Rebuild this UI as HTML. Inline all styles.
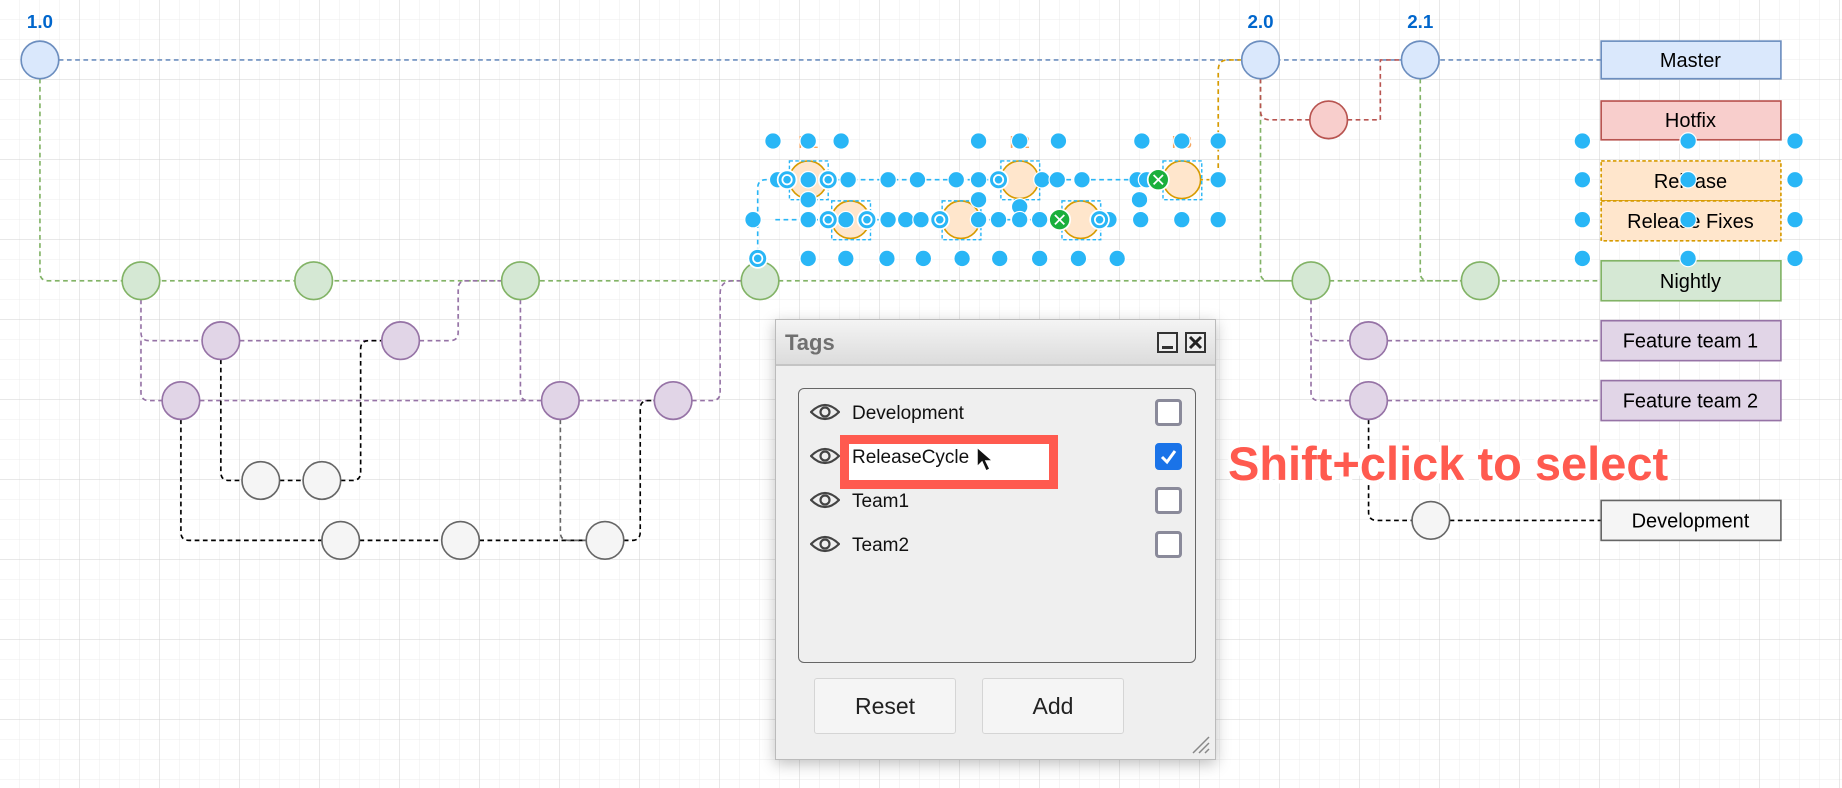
<!DOCTYPE html>
<html><head><meta charset="utf-8"><style>
html,body{margin:0;padding:0;background:#fff;}
body{width:1842px;height:788px;position:relative;overflow:hidden;font-family:"Liberation Sans",Arial,sans-serif;}
svg.main{position:absolute;left:0;top:0;}
.dlg{position:absolute;left:775px;top:319px;width:441px;height:441px;background:#efefef;border:1px solid #bbb;box-shadow:0 4px 14px rgba(0,0,0,.25);box-sizing:border-box;}
.tb{position:absolute;left:0;top:0;width:100%;height:46px;background:linear-gradient(#f4f4f4,#dcdcdc);border-bottom:2px solid #c4c4c4;box-sizing:border-box;}
.tb span{position:absolute;left:9px;top:10px;font-weight:bold;font-size:22px;color:#707070;}
.wb{position:absolute;top:12px;width:21px;height:21px;border:2px solid #333;box-sizing:border-box;background:#eee;}
.list{position:absolute;left:22px;top:68px;width:398px;height:275px;border:1.5px solid #666;border-radius:6px;box-sizing:border-box;}
.row{position:absolute;left:0;width:100%;height:30px;}
.row .t{position:absolute;left:53px;top:6px;font-size:19px;color:#111;}
.cb{position:absolute;left:356px;top:2px;width:27px;height:27px;border:3px solid #8a8a9a;border-radius:4px;box-sizing:border-box;background:#fff;}
.btn{position:absolute;top:358px;width:142px;height:56px;border:1.5px solid #d5d5d5;border-radius:3px;background:#f5f5f5;box-sizing:border-box;text-align:center;line-height:54px;font-size:23px;color:#222;}
</style></head><body>
<svg class="main" width="1842" height="788" viewBox="0 0 1842 788">
<defs>
<pattern id="mi" width="20" height="20" patternUnits="userSpaceOnUse"><path d="M20 0V20M0 20H20" stroke="#ececec" stroke-width="1" fill="none"/></pattern>
<pattern id="ma" width="80" height="80" patternUnits="userSpaceOnUse"><path d="M80 0V80M0 80H80" stroke="#d2d2d2" stroke-width="1" fill="none"/></pattern>
</defs>
<rect width="1842" height="788" fill="url(#mi)"/>
<rect width="1842" height="788" fill="url(#ma)"/>
<g transform="scale(1.17474)" font-family="Liberation Sans, Arial, sans-serif">
<g fill="none" stroke-width="1.4" stroke-dasharray="4 3">
<path d="M50 51H1363" stroke="#6c8ebf"/>
<path d="M34 67V232Q34 239 41 239H1363M1073 67V232Q1073 239 1080 239H1100M1209 67V232Q1209 239 1216 239H1244" stroke="#82b366"/>
<path d="M1073 67V94Q1073 102 1081 102H1115M1147 102H1175V51H1193" stroke="#b85450"/>
<path d="M1037 150V60Q1037 51 1045 51H1057M1020 153H1037" stroke="#d79b00"/>
<path d="M120 255V283Q120 290 127 290H172M204 290H325M357 290H383Q390 290 390 283V246Q390 239 397 239H427M1116 255V283Q1116 290 1123 290H1149M1181 290H1363M120 290V334Q120 341 127 341H138M170 341H461M443 255V334Q443 341 450 341M493 341H557M589 341H606Q613 341 613 334V250Q613 239 624 239H631M1116 290V334Q1116 341 1123 341H1149M1181 341H1363" stroke="#9673a6"/>
<path d="M188 306V402Q188 409 195 409H206M238 409H258M290 409H300Q307 409 307 402V297Q307 290 314 290H325M154 357V453Q154 460 161 460H274M306 460H376M408 460H499M531 460H538Q545 460 545 453V348Q545 341 552 341H557M1165 357V436Q1165 443 1172 443H1202M1234 443H1363" stroke="#000"/>
<path d="M477 357V453Q477 460 484 460H499" stroke="#666"/>
<path d="M645 215V160Q645 153 652 153H1000M660 187H940" stroke="#29b6f6"/>
</g>
<g stroke-width="1.4">
<g fill="#dae8fc" stroke="#6c8ebf"><circle cx="34" cy="51" r="16"/><circle cx="1073" cy="51" r="16"/><circle cx="1209" cy="51" r="16"/></g>
<circle cx="1131" cy="102" r="16" fill="#f8cecc" stroke="#b85450"/>
<g fill="#d5e8d4" stroke="#82b366"><circle cx="120" cy="239" r="16"/><circle cx="267" cy="239" r="16"/><circle cx="443" cy="239" r="16"/><circle cx="647" cy="239" r="16"/><circle cx="1116" cy="239" r="16"/><circle cx="1260" cy="239" r="16"/></g>
<g fill="#e1d5e7" stroke="#9673a6"><circle cx="188" cy="290" r="16"/><circle cx="341" cy="290" r="16"/><circle cx="1165" cy="290" r="16"/><circle cx="154" cy="341" r="16"/><circle cx="477" cy="341" r="16"/><circle cx="573" cy="341" r="16"/><circle cx="1165" cy="341" r="16"/></g>
<g fill="#f5f5f5" stroke="#666"><circle cx="222" cy="409" r="16"/><circle cx="274" cy="409" r="16"/><circle cx="290" cy="460" r="16"/><circle cx="392" cy="460" r="16"/><circle cx="515" cy="460" r="16"/><circle cx="1218" cy="443" r="16"/></g>
<g fill="#ffe6cc" stroke="#d79b00"><circle cx="688" cy="153" r="16"/><circle cx="724" cy="187" r="16"/><circle cx="818" cy="187" r="16"/><circle cx="868" cy="153" r="16"/><circle cx="920" cy="187" r="16"/><circle cx="1006" cy="153" r="16"/></g>
<g fill="none" stroke="#29b6f6" stroke-dasharray="3 2" stroke-width="1.2"><rect x="672" y="137" width="33" height="33"/><rect x="708" y="171" width="33" height="33"/><rect x="802" y="171" width="33" height="33"/><rect x="852" y="137" width="33" height="33"/><rect x="904" y="171" width="33" height="33"/><rect x="990" y="137" width="33" height="33"/></g>
</g>
<g font-weight="bold" font-size="16" fill="#0066cc" text-anchor="middle"><text x="34" y="24">1.0</text><text x="1073" y="24">2.0</text><text x="1209" y="24">2.1</text></g>
<g font-size="15" fill="#f5a55f" text-anchor="middle"><text x="688" y="126">F1</text><text x="868" y="126">F2</text><text x="1006" y="126">F3</text></g>
<g stroke-width="1.4" font-size="17" text-anchor="middle" fill="#000">
<rect x="1363" y="35" width="153" height="32" fill="#dae8fc" stroke="#6c8ebf"/><text x="1439" y="57">Master</text>
<rect x="1363" y="86" width="153" height="33" fill="#f8cecc" stroke="#b85450"/><text x="1439" y="108">Hotfix</text>
<rect x="1363" y="137" width="153" height="34" fill="#ffe6cc" stroke="#d79b00" stroke-dasharray="3 2"/><text x="1439" y="160">Release</text>
<rect x="1363" y="171" width="153" height="34" fill="#ffe6cc" stroke="#d79b00" stroke-dasharray="3 2"/><text x="1439" y="194">Release Fixes</text>
<rect x="1363" y="222" width="153" height="34" fill="#d5e8d4" stroke="#82b366"/><text x="1439" y="245">Nightly</text>
<rect x="1363" y="273" width="153" height="34" fill="#e1d5e7" stroke="#9673a6"/><text x="1439" y="296">Feature team 1</text>
<rect x="1363" y="324" width="153" height="34" fill="#e1d5e7" stroke="#9673a6"/><text x="1439" y="347">Feature team 2</text>
<rect x="1363" y="426" width="153" height="34" fill="#f5f5f5" stroke="#666"/><text x="1439" y="449">Development</text>
</g>
<g fill="#29b6f6" stroke="#fff" stroke-width="1">
<circle cx="658" cy="120" r="7"/><circle cx="688" cy="120" r="7"/><circle cx="716" cy="120" r="7"/><circle cx="833" cy="120" r="7"/><circle cx="868" cy="120" r="7"/><circle cx="901" cy="120" r="7"/><circle cx="972" cy="120" r="7"/><circle cx="1006" cy="120" r="7"/><circle cx="1037" cy="120" r="7"/>
<circle cx="662" cy="153" r="7"/><circle cx="688" cy="153" r="7"/><circle cx="722" cy="153" r="7"/><circle cx="756" cy="153" r="7"/><circle cx="781" cy="153" r="7"/><circle cx="814" cy="153" r="7"/><circle cx="833" cy="153" r="7"/><circle cx="887" cy="153" r="7"/><circle cx="900" cy="153" r="7"/><circle cx="921" cy="153" r="7"/><circle cx="968" cy="153" r="7"/><circle cx="976" cy="153" r="7"/><circle cx="1037" cy="153" r="7"/>
<circle cx="833" cy="170" r="7"/><circle cx="868" cy="176" r="7"/><circle cx="970" cy="170" r="7"/><circle cx="688" cy="170" r="7"/>
<circle cx="641" cy="187" r="7"/><circle cx="688" cy="187" r="7"/><circle cx="720" cy="187" r="7"/><circle cx="756" cy="187" r="7"/><circle cx="771" cy="187" r="7"/><circle cx="784" cy="187" r="7"/><circle cx="833" cy="187" r="7"/><circle cx="850" cy="187" r="7"/><circle cx="868" cy="187" r="7"/><circle cx="885" cy="187" r="7"/><circle cx="944" cy="187" r="7"/><circle cx="971" cy="187" r="7"/><circle cx="1006" cy="187" r="7"/><circle cx="1037" cy="187" r="7"/>
<circle cx="688" cy="220" r="7"/><circle cx="720" cy="220" r="7"/><circle cx="755" cy="220" r="7"/><circle cx="786" cy="220" r="7"/><circle cx="819" cy="220" r="7"/><circle cx="851" cy="220" r="7"/><circle cx="885" cy="220" r="7"/><circle cx="918" cy="220" r="7"/><circle cx="951" cy="220" r="7"/>
<circle cx="1347" cy="120" r="7"/><circle cx="1437" cy="120" r="7"/><circle cx="1528" cy="120" r="7"/>
<circle cx="1347" cy="153" r="7"/><circle cx="1437" cy="153" r="7"/><circle cx="1528" cy="153" r="7"/>
<circle cx="1347" cy="187" r="7"/><circle cx="1437" cy="187" r="7"/><circle cx="1528" cy="187" r="7"/>
<circle cx="1347" cy="220" r="7"/><circle cx="1437" cy="220" r="7"/><circle cx="1528" cy="220" r="7"/>
</g>
<g fill="#29b6f6" stroke="#fff" stroke-width="1.5">
<circle cx="670" cy="153" r="8"/><circle cx="705" cy="153" r="8"/><circle cx="738" cy="187" r="8"/><circle cx="800" cy="187" r="8"/><circle cx="850" cy="153" r="8"/><circle cx="645" cy="220" r="8"/><circle cx="705" cy="187" r="8"/><circle cx="936" cy="187" r="8"/>
</g>
<g fill="none" stroke="#fff" stroke-width="1.5"><circle cx="670" cy="153" r="4"/><circle cx="705" cy="153" r="4"/><circle cx="738" cy="187" r="4"/><circle cx="800" cy="187" r="4"/><circle cx="850" cy="153" r="4"/><circle cx="645" cy="220" r="4"/><circle cx="705" cy="187" r="4"/><circle cx="936" cy="187" r="4"/></g>
<g stroke="#fff" stroke-width="1.5"><circle cx="986" cy="153" r="9" fill="#1aaf3c"/><circle cx="902" cy="187" r="9" fill="#1aaf3c"/><path d="M982 149l8 8M990 149l-8 8M898 183l8 8M906 183l-8 8"/></g>
</g>
<text x="1228" y="480" font-family="Liberation Sans, Arial, sans-serif" font-weight="bold" font-size="47" fill="#ff5a4f" stroke="#fff" stroke-width="7" paint-order="stroke">Shift+click to select</text>
</svg>
<div class="dlg">
<div class="tb"><span>Tags</span>
<div class="wb" style="left:381px"><div style="position:absolute;left:3px;right:3px;bottom:2px;height:3px;background:#333"></div></div>
<div class="wb" style="left:409px"><svg width="17" height="17" style="position:absolute;left:0;top:0"><path d="M3 3L14 14M14 3L3 14" stroke="#222" stroke-width="3"/></svg></div>
</div>
<div class="list">
<div class="row" style="top:8px"><svg width="30" height="20" style="position:absolute;left:11px;top:5px"><path d="M1 10Q15 -4 29 10Q15 24 1 10Z" fill="none" stroke="#444" stroke-width="2.2"/><circle cx="15" cy="10" r="4.5" fill="none" stroke="#444" stroke-width="2.2"/></svg><span class="t">Development</span><div class="cb"></div></div>
<div class="row" style="top:52px"><div style="position:absolute;left:42px;top:-6px;width:200px;height:36px;border:9px solid #ff5a4f;background:#fff;box-sizing:content-box;margin-left:-1px"></div><svg width="30" height="20" style="position:absolute;left:11px;top:5px"><path d="M1 10Q15 -4 29 10Q15 24 1 10Z" fill="none" stroke="#444" stroke-width="2.2"/><circle cx="15" cy="10" r="4.5" fill="none" stroke="#444" stroke-width="2.2"/></svg><span class="t">ReleaseCycle</span><svg width="26" height="30" style="position:absolute;left:176px;top:4px"><path d="M2 2L2 22L7 17L11 26L15 24L11 16L18 16Z" fill="#111" stroke="#fff" stroke-width="1.5"/></svg><div class="cb" style="background:#1a73e8;border-color:#1a73e8"><svg width="21" height="21"><path d="M4 11L9 16L17 5" fill="none" stroke="#fff" stroke-width="3"/></svg></div></div>
<div class="row" style="top:96px"><svg width="30" height="20" style="position:absolute;left:11px;top:5px"><path d="M1 10Q15 -4 29 10Q15 24 1 10Z" fill="none" stroke="#444" stroke-width="2.2"/><circle cx="15" cy="10" r="4.5" fill="none" stroke="#444" stroke-width="2.2"/></svg><span class="t">Team1</span><div class="cb"></div></div>
<div class="row" style="top:140px"><svg width="30" height="20" style="position:absolute;left:11px;top:5px"><path d="M1 10Q15 -4 29 10Q15 24 1 10Z" fill="none" stroke="#444" stroke-width="2.2"/><circle cx="15" cy="10" r="4.5" fill="none" stroke="#444" stroke-width="2.2"/></svg><span class="t">Team2</span><div class="cb"></div></div>
</div>
<div class="btn" style="left:38px">Reset</div>
<div class="btn" style="left:206px">Add</div>
<svg width="22" height="22" style="position:absolute;left:413px;top:413px"><path d="M20 4L4 20M20 10L10 20M20 16L16 20" stroke="#888" stroke-width="1.5"/></svg>
</div>
</body></html>
